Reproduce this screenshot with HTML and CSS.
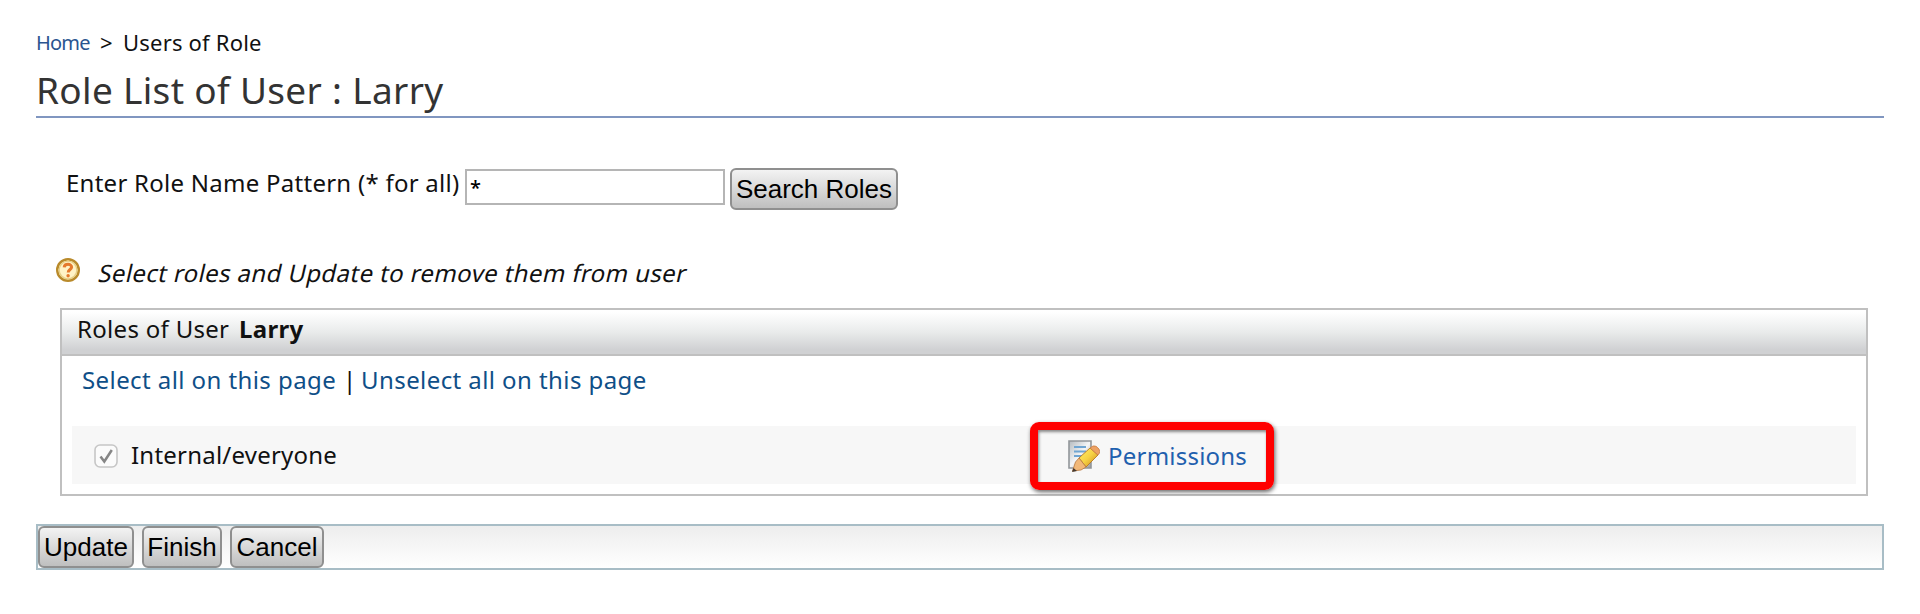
FILE: index.html
```html
<!DOCTYPE html>
<html lang="en">
<head>
<meta charset="utf-8">
<title>Role List of User : Larry</title>
<link rel="stylesheet" href="styles.css">
</head>
<body>
<main class="page">
  <nav class="crumbs"><a class="home" href="#">Home</a><span class="sep">&gt;</span><span class="here">Users of Role</span></nav>
  <h1 class="title">Role List of User : Larry</h1>
  <form class="search">
    <label class="label" for="pattern">Enter Role Name Pattern (* for all)</label>
    <input class="field" id="pattern" type="text" value="*">
    <button class="btn btn-search" type="button">Search Roles</button>
  </form>
  <div class="hint">
    <svg class="help" viewBox="0 0 24 24"><circle cx="12" cy="12" r="10.8" fill="#fff3c6" stroke="#b98a2b" stroke-width="2.4"/><circle cx="12" cy="12" r="8.9" fill="none" stroke="#e6cf86" stroke-width="1.4"/><path d="M8.2 9.3C8.5 5.3 15.8 5.500 15.600 9.200C15.500 11.500 12.200 11.600 12.200 14.400" fill="none" stroke="#e57a2c" stroke-width="3"/><circle cx="12.100" cy="17.700" r="1.700" fill="#e57a2c"/></svg>
    <em class="hint-text">Select roles and Update to remove them from user</em>
  </div>
  <section class="panel">
    <h2 class="panel-head"><span class="head-label">Roles of User</span><b class="head-user">Larry</b></h2>
    <div class="links"><a class="select" href="#">Select all on this page</a><span class="bar">|</span><a class="unselect" href="#">Unselect all on this page</a></div>
    <div class="row">
      <div class="role">
        <svg class="check" viewBox="0 0 24 24"><rect x="1" y="1" width="22" height="22" rx="5" fill="#fbfbfb" stroke="#c6c6c6" stroke-width="1.6"/><path d="M6.500 12.500L10.300 17.500L17.800 6" fill="none" stroke="#868686" stroke-width="2.500"/></svg>
        <span class="role-name">Internal/everyone</span>
      </div>
      <div class="callout">
        <svg class="edit" viewBox="0 0 32 32">
          <defs>
            <linearGradient id="sheet" x2="1" y2="1"><stop stop-color="#b4babf"/><stop offset=".5" stop-color="#f4f5f6"/><stop offset="1" stop-color="#999"/></linearGradient>
            <linearGradient id="wood" x1="0" y1="0" x2="1" y2="1"><stop stop-color="#fff06a"/><stop offset=".5" stop-color="#f6d143"/><stop offset="1" stop-color="#c88212"/></linearGradient>
          </defs>
          <path d="M1 1H23V28H1Z" fill="url(#sheet)" stroke="#92969a" stroke-width="1.6"/>
          <path d="M6 7H18M6 11.5H18M6 16H14" stroke="#6fa5d2" stroke-width="2"/>
          <path d="M11 18L22 8L30 15L18 27Z" fill="url(#wood)" stroke="#b87824" stroke-width=".9"/>
          <path d="M22 8L25 6Q28 5 31 9Q32 11.500 31.500 13L30 15Z" fill="#eda263" stroke="#cb7c43" stroke-width=".8"/>
          <path d="M11 18L7.500 22L4.500 31L13 30L18 27Z" fill="#f2b878" stroke="#b97840" stroke-width=".8"/>
          <path d="M5.500 28L4 32L9 31Z" fill="#46392f"/>
        </svg>
        <a class="perm" href="#">Permissions</a>
      </div>
    </div>
  </section>
  <footer class="actions">
    <button class="btn btn-update" type="button">Update</button>
    <button class="btn btn-finish" type="button">Finish</button>
    <button class="btn btn-cancel" type="button">Cancel</button>
  </footer>
</main>
</body>
</html>
```
FILE: styles.css
```css
* { box-sizing: border-box; }
body {
  margin: 0;
  background: #fff;
  color: #111;
  font-family: "Noto Sans", "Open Sans", sans-serif;
  font-size: 24px;
}
a { text-decoration: none; }
svg { display: block; flex: none; }
.page { display: flex; flex-direction: column; padding: 28px 36px 0; }
.crumbs { display: flex; height: 30px; line-height: 28px; font-size: 22px; white-space: pre; }
.home { width: 64px; color: #2a5590; font-size: 20px; letter-spacing: -.8px; line-height: 30px; }
.sep { width: 23px; }
.here { letter-spacing: .2px; }
.title {
  height: 60px;
  margin: 0;
  border-bottom: 2px solid #8096c0;
  color: #333;
  font-size: 37px;
  font-weight: 400;
  letter-spacing: .32px;
  line-height: 64px;
}
.search { display: flex; height: 42px; margin-top: 50px; padding-left: 30px; }
.label { width: 399px; letter-spacing: .26px; line-height: 30px; white-space: nowrap; }
.field {
  width: 260px;
  height: 36px;
  margin: 1px 5px 0 0;
  padding: 0 3px;
  border: 2px solid #b5b5b5;
  color: #000;
  font: 500 20px "Noto Sans", sans-serif;
}
.btn {
  height: 42px;
  padding: 0;
  border: 2px solid #8f8f8f;
  border-radius: 6px;
  background: linear-gradient(#f3f3f3, #bfbfbf);
  color: #000;
  font: 26px/36px "Liberation Sans", Arial, sans-serif;
  white-space: nowrap;
}
.btn-search { width: 168px; }
.hint { display: flex; height: 50px; margin-top: 48px; padding-left: 20px; }
.help { width: 24px; height: 24px; }
.hint-text {
  height: 30px;
  margin-left: 17px;
  font-style: normal;
  letter-spacing: .38px;
  line-height: 30px;
  white-space: nowrap;
  transform: skewX(-13deg);
  transform-origin: 0 80%;
}
.panel { height: 188px; margin: 0 16px 0 24px; border: 2px solid #c0c0c0; }
.panel-head {
  display: flex;
  height: 46px;
  margin: 0;
  padding-left: 15px;
  border-bottom: 2px solid #c0c0c0;
  background: linear-gradient(#fff 5%, #e9ebeb 50%, #d0d1d3 90%);
  font-size: 24px;
  font-weight: 400;
  letter-spacing: .3px;
  line-height: 38px;
}
.head-label { width: 162px; white-space: nowrap; }
.links { display: flex; height: 70px; padding-left: 20px; letter-spacing: .42px; line-height: 48px; white-space: nowrap; }
.links a { color: #0f4f88; }
.select { width: 261px; }
.bar { width: 18px; }
.row { display: flex; height: 58px; margin: 0 10px; background: #f7f7f7; }
.role { display: flex; width: 958px; padding: 18px 0 0 22px; }
.check { width: 24px; height: 24px; }
.role-name { margin-left: 13px; letter-spacing: .22px; line-height: 22px; }
.callout {
  display: flex;
  width: 244px;
  height: 68px;
  margin-top: -4px;
  padding: 10px 0 0 30px;
  border: 8px solid #f00;
  border-radius: 9px;
  box-shadow: 1px 2px 4px rgba(0, 0, 0, .6), inset 1px 2px 3px rgba(0, 0, 0, .45);
}
.edit { width: 32px; height: 32px; }
.perm { margin-left: 8px; color: #1f60ae; letter-spacing: .22px; line-height: 32px; }
.actions {
  display: flex;
  gap: 8px;
  height: 46px;
  margin-top: 28px;
  border: 2px solid #a8bdc6;
  background: linear-gradient(#ededed, #fff);
}
.btn-update { width: 96px; }
.btn-finish { width: 80px; }
.btn-cancel { width: 94px; }
```
